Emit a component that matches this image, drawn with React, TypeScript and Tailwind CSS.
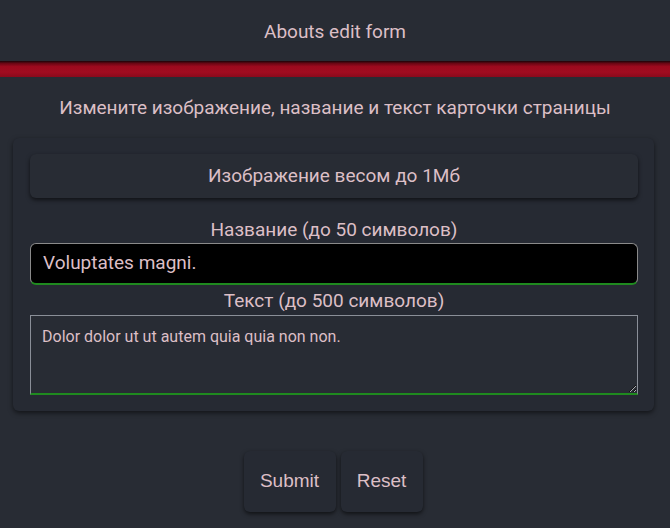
import React from "react";

const narrow = { fontFamily: '"Liberation Sans Narrow", Roboto, "Liberation Sans", sans-serif' };

export default function App() {
  return (
    <div className="min-h-[528px] w-full bg-[#282c34] text-[#dcbfc6]" style={narrow}>
      <header className="h-[61px] flex items-center justify-center text-[19px] pt-[3px]">
        Abouts edit form
      </header>
      <div className="h-[16px] bg-[linear-gradient(to_bottom,#1a0408_0%,#6a0614_15%,#9c0a1e_35%,#a00c20_70%,#8a0a1c_100%)]" />
      <div className="pt-[17px] pb-[15px] text-center text-[19px]">
        Измените изображение, название и текст карточки страницы
      </div>
      <div className="ml-[13px] mr-[16px] rounded-[6px] bg-[#262a33] shadow-[0_2px_5px_rgba(0,0,0,0.55)] pl-[17px] pr-[16px] pt-[16px] pb-[16px]">
        <button
          className="w-full h-[44px] rounded-[6px] bg-[#282c34] shadow-[0_2px_4px_rgba(0,0,0,0.6)] text-[19px] text-[#dcbfc6] pt-[2px]"
          style={narrow}
        >
          Изображение весом до 1Мб
        </button>
        <div className="text-center text-[19px] mt-[19px] h-[26px] leading-[26px]">
          Название (до 50 символов)
        </div>
        <div className="h-[42px] rounded-[6px] bg-black border border-[#8a8a8a] border-b-2 border-b-[#1f8a1f] flex items-center px-[12px] text-[19px]">
          Voluptates magni.
        </div>
        <div className="text-center text-[19px] mt-[3px] h-[27px] leading-[26px]">
          Текст (до 500 символов)
        </div>
        <textarea
          className="block w-full h-[80px] bg-[#282c34] border border-[#8a8f98] border-b-2 border-b-[#1f8a1f] px-[11px] pt-[9px] text-[16px] text-[#dcbfc6] outline-none resize-y"
          style={narrow}
          defaultValue="Dolor dolor ut ut autem quia quia non non."
        />
      </div>
      <div className="flex justify-center gap-[5px] mt-[40px] pr-[4px]">
        <button
          className="w-[92px] h-[61px] rounded-[6px] bg-[#262a33] shadow-[0_2px_4px_rgba(0,0,0,0.6)] text-[19px] text-[#dcbfc6]"
          style={{ fontFamily: '"Liberation Sans", Arial, sans-serif' }}
        >
          Submit
        </button>
        <button
          className="w-[82px] h-[61px] rounded-[6px] bg-[#262a33] shadow-[0_2px_4px_rgba(0,0,0,0.6)] text-[19px] text-[#dcbfc6]"
          style={{ fontFamily: '"Liberation Sans", Arial, sans-serif' }}
        >
          Reset
        </button>
      </div>
    </div>
  );
}
